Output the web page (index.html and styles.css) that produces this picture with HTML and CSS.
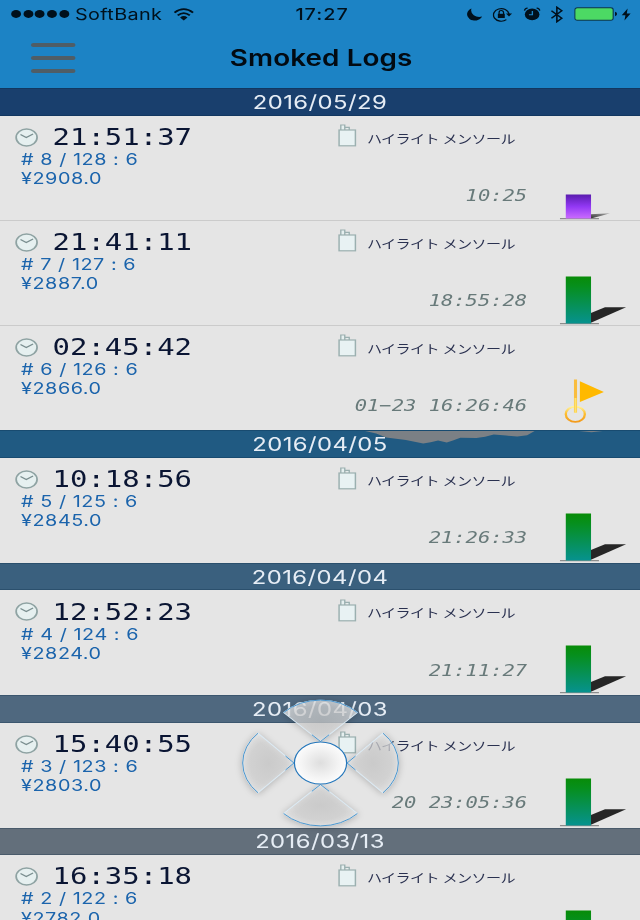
FILE: index.html
```html
<!DOCTYPE html>
<html lang="ja">
<head>
  <meta charset="UTF-8">
  <title>Smoked Logs</title>
  <link rel="stylesheet" href="styles.css">
</head>
<body>
  <!-- Shared icons -->
  <svg class="defs" width="0" height="0">
    <defs>
      <linearGradient id="green" x1="0" y1="0" x2="0" y2="1">
        <stop offset="0" stop-color="#088c08"/>
        <stop offset="0.2" stop-color="#068f1c"/>
        <stop offset="1" stop-color="#06928f"/>
      </linearGradient>
      <linearGradient id="purple" x1="0" y1="0" x2="0" y2="1">
        <stop offset="0" stop-color="#5a1cae"/>
        <stop offset="0.5" stop-color="#9238f4"/>
        <stop offset="1" stop-color="#ca6bff"/>
      </linearGradient>
      <linearGradient id="gold" x1="0" y1="0" x2="0" y2="1">
        <stop offset="0" stop-color="#fff3a0"/>
        <stop offset="0.45" stop-color="#fdc033"/>
        <stop offset="1" stop-color="#f39a1c"/>
      </linearGradient>
      <linearGradient id="shade" x1="0" y1="1" x2="1" y2="0">
        <stop offset="0" stop-color="#333"/>
        <stop offset="1" stop-color="#aaa"/>
      </linearGradient>
      <radialGradient id="knob">
        <stop offset="0" stop-color="#dedede"/>
        <stop offset="0.7" stop-color="#f4f4f4"/>
        <stop offset="1" stop-color="#fcfcfc"/>
      </radialGradient>
      <radialGradient id="petal" cx="0.5" cy="0.5" r="0.6">
        <stop offset="0" stop-color="#d2d2d2" stop-opacity="0.72"/>
        <stop offset="0.6" stop-color="#dcdcdc" stop-opacity="0.72"/>
        <stop offset="1" stop-color="#f0f0f0" stop-opacity="0.75"/>
      </radialGradient>
      <symbol id="clock" viewBox="0 0 20 20">
        <circle cx="10" cy="10" r="8.9" fill="#e6f0f0" stroke="#8fa3a3" stroke-width="1.5"/>
        <path d="M4.8 6.8 L9.7 10 L15.5 6.3" fill="none" stroke="#7b8f90" stroke-width="1.2"/>
      </symbol>
      <symbol id="pack" viewBox="0 0 16 23">
        <path d="M2.4 6 V1 H5.6 V6 M5.6 3.4 H9.2 V6" fill="#e6f0f0" stroke="#9bb0b0" stroke-width="1.1"/>
        <rect x="1" y="6" width="13.2" height="15.8" fill="#e8f2f3" stroke="#9bb0b0" stroke-width="1.2"/>
      </symbol>
      <symbol id="bar-green" viewBox="0 0 65 104">
        <path d="M25.5 92 L36.9 86.3 H53.9 L25.5 101.7 Z" fill="#262626"/>
        <rect x="0.5" y="102.2" width="31.5" height="1" fill="#777"/>
        <rect x="5.2" y="55.5" width="20.4" height="47" fill="url(#green)"/>
      </symbol>
      <symbol id="bar-purple" viewBox="0 0 65 104">
        <path d="M25.5 98.2 L40.9 97.2 L34 99.8 L25.5 102.5 Z" fill="url(#shade)"/>
        <rect x="0.5" y="102.2" width="31.5" height="1" fill="#777"/>
        <rect x="5.2" y="78.5" width="20.4" height="24" fill="url(#purple)"/>
      </symbol>
      <symbol id="flag" viewBox="0 0 65 104">
        <circle cx="12.9" cy="88.2" r="7.7" fill="none" stroke="url(#gold)" stroke-width="1.9"/>
        <rect x="11.8" y="53.5" width="2.5" height="33" fill="#f9bd3e"/>
        <rect x="12.2" y="72" width="1.7" height="15" fill="#fde36f"/>
        <path d="M16.6 55.2 L36 66 L16.6 76 Z" fill="#ffb900"/>
      </symbol>
    </defs>
  </svg>

  <div class="screen">
    <header class="topbar">
      <div class="status">
        <div class="status-left">
          <span class="dots"><i></i><i></i><i></i><i></i><i></i></span>
          <span class="carrier">SoftBank</span>
          <svg class="wifi" width="17" height="13" viewBox="0 0 17 13">
            <path d="M1 4.7 Q8.5 -2.3 16 4.7 M3.6 7.4 Q8.5 2.9 13.4 7.4" fill="none" stroke="#00101c" stroke-width="1.7"/>
            <path d="M5.5 9.4 Q8.5 6.6 11.5 9.4 L8.5 12.5 Z" fill="#00101c"/>
          </svg>
        </div>
        <div class="status-time">17:27</div>
        <div class="status-right">
          <svg class="moon" width="13" height="13" viewBox="0 0 13 13">
            <path d="M4 0.6 A6.3 6.3 0 1 0 12.6 8.6 A6.6 6.6 0 0 1 4 0.6 Z" fill="#00101c"/>
          </svg>
          <svg class="lock" width="16" height="15" viewBox="0 0 16 15">
            <path d="M11.2 12.7 A6.3 6.3 0 1 1 13.3 7" fill="none" stroke="#00101c" stroke-width="1.1"/>
            <path d="M10.9 6.6 H15.8 L13.3 9.4 Z" fill="#00101c"/>
            <rect x="4.3" y="6.8" width="5.6" height="4.2" fill="#00101c"/>
            <path d="M5.3 7 V5.4 A1.8 1.8 0 0 1 8.9 5.4 V7" fill="none" stroke="#00101c" stroke-width="1"/>
          </svg>
          <svg class="alarm" width="14" height="14" viewBox="0 0 14 14">
            <circle cx="7" cy="7.4" r="5.9" fill="#00101c"/>
            <path d="M0.8 3.6 Q1 1.4 3.4 1 M13.2 3.6 Q13 1.4 10.6 1" fill="none" stroke="#00101c" stroke-width="1.1"/>
            <path d="M7.2 3.9 V7.8 H4.4" fill="none" stroke="#1c83c5" stroke-width="1.1"/>
          </svg>
          <svg class="bt" width="10" height="17" viewBox="0 0 10 17">
            <path d="M0.6 4.7 L9 12.2 L5 15.8 V1.2 L9 4.8 L0.6 12.3" fill="none" stroke="#00101c" stroke-width="1.3"/>
          </svg>
          <svg class="battery" width="35" height="14" viewBox="0 0 35 14">
            <rect x="0.5" y="0.8" width="31" height="12.4" rx="2" fill="#4cd964" stroke="#0a3350" stroke-width="0.9"/>
            <path d="M33 4.8 Q34.6 5.4 34.6 7 Q34.6 8.6 33 9.2 Z" fill="#00101c"/>
          </svg>
          <svg class="bolt" width="8" height="13" viewBox="0 0 8 13">
            <path d="M5.2 0.4 L0.4 7.2 H3.4 L2.6 12.6 L7.6 5.4 H4.5 Z" fill="#00101c"/>
          </svg>
        </div>
      </div>
      <div class="nav">
        <div class="menu"><i></i><i></i><i></i></div>
        <h1>Smoked Logs</h1>
      </div>
    </header>

    <h2 class="date d1"><span>2016/05/29</span></h2>
    <div class="log">
      <svg class="clock"><use href="#clock"/></svg>
      <div class="info">
        <div class="time">21:51:37</div>
        <div class="count"># 8 / 128 : 6</div>
        <div class="price">¥2908.0</div>
      </div>
      <svg class="pack"><use href="#pack"/></svg>
      <div class="brand">ハイライト メンソール</div>
      <div class="span">10:25</div>
      <svg class="chart"><use href="#bar-purple"/></svg>
    </div>
    <div class="log">
      <svg class="clock"><use href="#clock"/></svg>
      <div class="info">
        <div class="time">21:41:11</div>
        <div class="count"># 7 / 127 : 6</div>
        <div class="price">¥2887.0</div>
      </div>
      <svg class="pack"><use href="#pack"/></svg>
      <div class="brand">ハイライト メンソール</div>
      <div class="span">18:55:28</div>
      <svg class="chart"><use href="#bar-green"/></svg>
    </div>
    <div class="log">
      <svg class="clock"><use href="#clock"/></svg>
      <div class="info">
        <div class="time">02:45:42</div>
        <div class="count"># 6 / 126 : 6</div>
        <div class="price">¥2866.0</div>
      </div>
      <svg class="pack"><use href="#pack"/></svg>
      <div class="brand">ハイライト メンソール</div>
      <div class="span">01−23 16:26:46</div>
      <svg class="chart"><use href="#flag"/></svg>
    </div>

    <h2 class="date d2">
      <svg class="cloud" width="280" height="14" viewBox="0 0 280 14">
        <path d="M67 0 H204 L198 4.2 L190 5.6 L181 4.6 L171 3.4 L164 5.8 L157 7 L144 6.8 L138 9.4 L133 11.6 L126 9.4 L120 11.2 L114 12.6 L100 9 L84 6.4 L76 2.6 Z" fill="#7b8085"/>
        <path d="M240 0 H259 L250 1.2 Z" fill="#7b8085"/>
      </svg>
      <span>2016/04/05</span>
    </h2>
    <div class="log">
      <svg class="clock"><use href="#clock"/></svg>
      <div class="info">
        <div class="time">10:18:56</div>
        <div class="count"># 5 / 125 : 6</div>
        <div class="price">¥2845.0</div>
      </div>
      <svg class="pack"><use href="#pack"/></svg>
      <div class="brand">ハイライト メンソール</div>
      <div class="span">21:26:33</div>
      <svg class="chart"><use href="#bar-green"/></svg>
    </div>

    <h2 class="date d3"><span>2016/04/04</span></h2>
    <div class="log">
      <svg class="clock"><use href="#clock"/></svg>
      <div class="info">
        <div class="time">12:52:23</div>
        <div class="count"># 4 / 124 : 6</div>
        <div class="price">¥2824.0</div>
      </div>
      <svg class="pack"><use href="#pack"/></svg>
      <div class="brand">ハイライト メンソール</div>
      <div class="span">21:11:27</div>
      <svg class="chart"><use href="#bar-green"/></svg>
    </div>

    <h2 class="date d4"><span>2016/04/03</span></h2>
    <div class="log">
      <svg class="clock"><use href="#clock"/></svg>
      <div class="info">
        <div class="time">15:40:55</div>
        <div class="count"># 3 / 123 : 6</div>
        <div class="price">¥2803.0</div>
      </div>
      <svg class="pack"><use href="#pack"/></svg>
      <div class="brand">ハイライト メンソール</div>
      <div class="span">20 23:05:36</div>
      <svg class="chart"><use href="#bar-green"/></svg>
    </div>

    <h2 class="date d5"><span>2016/03/13</span></h2>
    <div class="log">
      <svg class="clock"><use href="#clock"/></svg>
      <div class="info">
        <div class="time">16:35:18</div>
        <div class="count"># 2 / 122 : 6</div>
        <div class="price">¥2782.0</div>
      </div>
      <svg class="pack"><use href="#pack"/></svg>
      <div class="brand">ハイライト メンソール</div>
      <svg class="chart"><use href="#bar-green"/></svg>
    </div>

    <!-- Floating control pad -->
    <svg class="pad" viewBox="-75 -75 150 150">
      <g class="petals" fill="url(#petal)">
        <path d="M0 -21.5 L-29.8 -50.5 A42 42 0 0 1 29.8 -50.5 Z"/>
        <path d="M21.5 0 L50.5 -29.8 A42 42 0 0 1 50.5 29.8 Z"/>
        <path d="M0 21.5 L29.8 50.5 A42 42 0 0 1 -29.8 50.5 Z"/>
        <path d="M-21.5 0 L-50.5 29.8 A42 42 0 0 1 -50.5 -29.8 Z"/>
      </g>
      <g class="edges">
        <path d="M-29.8 -50.5 A42 42 0 0 1 29.8 -50.5"/>
        <path d="M50.5 -29.8 A42 42 0 0 1 50.5 29.8"/>
        <path d="M29.8 50.5 A42 42 0 0 1 -29.8 50.5"/>
        <path d="M-50.5 29.8 A42 42 0 0 1 -50.5 -29.8"/>
        <path d="M-7 -28.3 L0 -21.5 L7 -28.3 M-7 28.3 L0 21.5 L7 28.3 M-28.3 -7 L-21.5 0 L-28.3 7 M28.3 -7 L21.5 0 L28.3 7"/>
      </g>
      <circle class="knob" r="21.1" fill="url(#knob)"/>
    </svg>
  </div>
</body>
</html>
```
FILE: styles.css
```css
body { margin: 0; width: 640px; height: 920px; overflow: hidden; background: #e5e5e5; font-family: Inter, "Noto Sans CJK JP", sans-serif; }
.defs { position: absolute; }

/* narrow layout stretched to the full window width */
.screen { position: relative; width: 518px; height: 920px; overflow: hidden; transform: scaleX(1.2375); transform-origin: 0 0; }
.screen svg { display: block; }

/* Top bar */
.topbar { height: 88.3px; background: #1c83c5; color: #00101c; }
.status { display: grid; grid-template-columns: 1fr auto 1fr; align-items: center; height: 28px; }
.status-left { display: flex; align-items: center; padding-left: 9px; }
.dots { display: flex; gap: 1.8px; }
.dots i { width: 7.9px; height: 7.9px; border-radius: 50%; background: #00101c; }
.carrier { margin-left: 5px; font-size: 16px; letter-spacing: 0.28px; }
.wifi { margin-left: 8.5px; }
.status-time { font-size: 16px; font-weight: 500; letter-spacing: 0.8px; padding-left: 2.5px; }
.status-right { display: flex; align-items: center; justify-content: flex-end; padding-right: 7.8px; }
.moon { margin-right: 8px; }
.lock { margin-right: 9px; }
.alarm { margin-right: 8px; }
.bt { margin-right: 9px; }
.battery { margin-right: 3px; }
.nav { position: relative; height: 60px; display: flex; align-items: center; justify-content: center; }
.menu { position: absolute; left: 24.6px; top: 15px; display: flex; flex-direction: column; gap: 9px; }
.menu i { width: 36px; height: 4px; border-radius: 2px; background: #4f5d66; }
h1 { margin: 0; padding-left: 1px; font-size: 22.5px; font-weight: 600; letter-spacing: 0.08px; line-height: 58px; color: #020a12; }

/* Section headers */
.date { position: relative; box-sizing: border-box; height: 27.57px; margin: 0; padding-right: 0.8px; display: flex; align-items: center; justify-content: center; font-size: 19.3px; font-weight: 400; letter-spacing: 0.34px; color: #e6edf5; border-top: 1px solid rgba(0,30,60,0.25); border-bottom: 1px solid rgba(0,30,60,0.25); }
.date span { position: relative; }
.d1 { background: #193f6d; }
.d2 { background: #205a82; }
.d3 { background: #3a607e; }
.d4 { background: #4f687f; }
.d5 { background: #636f7b; }
.cloud { position: absolute; left: 228px; top: 0; }

/* Log rows */
.log { box-sizing: border-box; height: 104.87px; display: grid; grid-template-columns: 12px 19px 11.5px 230.5px 16px 7.5px 129.5px 26px 65px; grid-template-rows: 46px 1fr; background: #e5e5e5; }
.log:has(+ .log) { box-shadow: inset 0 -1px 0 #cbcbcb; }
.clock { grid-column: 2; grid-row: 1; width: 19px; height: 19px; margin-top: 12px; }
.info { grid-column: 4; grid-row: 1 / 3; padding-top: 9.2px; }
.time { font-family: "DejaVu Sans Mono", monospace; font-size: 23.4px; line-height: 25px; color: #0a1533; }
.count, .price { margin-left: -25.5px; font-size: 16px; line-height: 19.2px; letter-spacing: 0.44px; color: #1b64ac; }
.pack { grid-column: 5; grid-row: 1; width: 16px; height: 23px; margin-top: 8.5px; }
.brand { grid-column: 7 / 9; grid-row: 1; padding-top: 14px; font-size: 12.2px; line-height: 20px; letter-spacing: -0.5px; color: #2a3150; white-space: nowrap; }
.span { grid-column: 4 / 8; grid-row: 2; justify-self: end; padding-top: 24.3px; font-family: "DejaVu Sans Mono", monospace; font-style: italic; font-size: 16.55px; line-height: 20px; color: #687a7a; }
.chart { grid-column: 9; grid-row: 1 / 3; width: 65px; height: 104px; }

/* Control pad */
.pad { position: absolute; left: 184.1px; top: 688px; width: 150px; height: 150px; }
.petals path { stroke: #dcebf5; stroke-width: 0.9; filter: drop-shadow(0 1px 3px rgba(0,0,0,0.28)); }
.edges path { fill: none; stroke: #3b8cc8; stroke-width: 0.8; }
.knob { stroke: #2577bb; stroke-width: 1; }
```
